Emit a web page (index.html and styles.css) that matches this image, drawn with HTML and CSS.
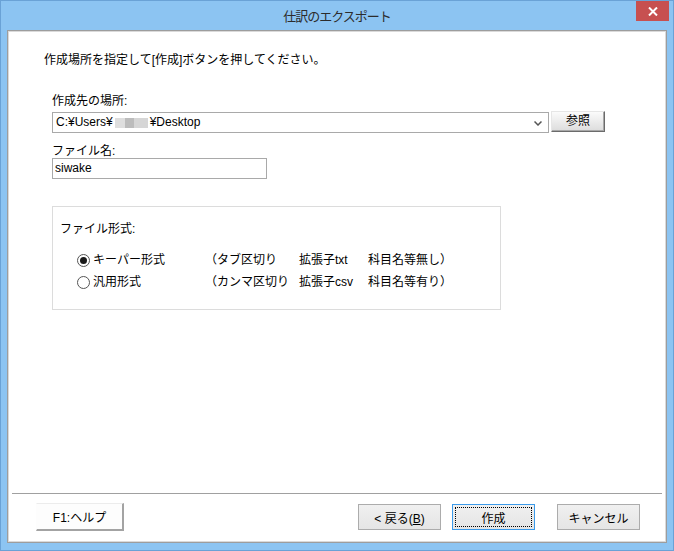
FILE: index.html
```html
<!DOCTYPE html>
<html>
	<head>
		<meta charset="UTF-8">
		<title>仕訳のエクスポート</title>
		<link rel="stylesheet" href="styles.css">
	</head>
	<body>
		<div class="window">
			<div class="titlebar">
				<div class="title">仕訳のエクスポート</div>
				<div class="close">
					<svg width="10" height="9" viewBox="0 0 10 9">
						<path d="M1 0.5 L9 8.5 M9 0.5 L1 8.5" stroke="#fff" stroke-width="2" fill="none"/>
					</svg>
				</div>
			</div>
			<div class="client">
				<div class="client-inner">
					<div class="main">
						<div class="lead">作成場所を指定して[作成]ボタンを押してください。</div>
						<div class="form">
							<div class="label">作成先の場所:</div>
							<div class="path-row">
								<div class="combo">
									<span class="combo-text">C:¥Users¥<span class="blur"></span>¥Desktop</span>
									<svg class="arrow" width="8" height="5" viewBox="0 0 8 5">
										<path d="M0.5 0.5 L4 4 L7.5 0.5" stroke="#555" stroke-width="1.5" fill="none"/>
									</svg>
								</div>
								<div class="btn-ref">参照</div>
							</div>
							<div class="label label-name">ファイル名:</div>
							<div class="textbox">siwake</div>
							<div class="group">
								<div class="group-title">ファイル形式:</div>
								<div class="options">
									<div class="opt"><span class="radio checked"></span>キーパー形式</div>
									<div>（タブ区切り</div>
									<div>拡張子txt</div>
									<div>科目名等無し）</div>
									<div class="opt"><span class="radio"></span>汎用形式</div>
									<div>（カンマ区切り</div>
									<div>拡張子csv</div>
									<div>科目名等有り）</div>
								</div>
							</div>
						</div>
					</div>
					<div class="footer">
						<button class="btn-help">F1:ヘルプ</button>
						<div class="footer-right">
							<button class="btn">&lt; 戻る(<u>B</u>)</button>
							<button class="btn btn-focus"><span class="focus-ring">作成</span></button>
							<button class="btn btn-cancel">キャンセル</button>
						</div>
					</div>
				</div>
			</div>
		</div>
	</body>
</html>
```

FILE: styles.css
```css
*{
	margin: 0;
	padding: 0;
	box-sizing: border-box;
}
body{
	font-family: "Liberation Sans", "Noto Sans CJK JP", sans-serif;
	font-size: 12px;
	color: #000;
	background: #fff;
}
.window{
	width: 674px;
	height: 551px;
	border: 1px solid #6aa2d6;
	background-color: #8cc4f2;
	padding: 0 6px 7px 6px;
	display: flex;
	flex-direction: column;
	position: relative;
}
.titlebar{
	height: 29px;
	margin: 0 -6px;
}
.title{
	text-align: center;
	line-height: 30px;
	font-size: 13px;
	letter-spacing: -1px;
	color: #2c2c2c;
	font-family: "Noto Sans CJK JP", sans-serif;
}
/*閉じるボタン*/
.close{
	position: absolute;
	top: 0;
	right: 4px;
	width: 33px;
	height: 20px;
	background-color: #c75050;
	display: flex;
	align-items: center;
	justify-content: center;
}
.client{
	flex: 1;
	border: 1px solid #9d9d9d;
	display: flex;
}
.client-inner{
	flex: 1;
	border: 1px solid #dadada;
	background-color: #fff;
	display: flex;
	flex-direction: column;
}
.main{
	flex: 1;
	padding-top: 20px;
}
.lead{
	padding-left: 35px;
	line-height: 17px;
}
.form{
	padding-left: 43px;
	margin-top: 24px;
}
.label{
	line-height: 16px;
}
.path-row{
	display: flex;
	align-items: flex-start;
	margin-top: 2px;
}
.combo{
	width: 497px;
	height: 21px;
	margin-top: 1px;
	border: 1px solid #a9a9a9;
	display: flex;
	align-items: center;
	justify-content: space-between;
	padding: 0 6px 0 3px;
}
.combo-text{
	line-height: 19px;
	display: flex;
	align-items: center;
}
.blur{
	display: inline-block;
	width: 33px;
	height: 10px;
	margin: 0 2px;
	background: linear-gradient(to right, #dedede 0, #dedede 30%, #bcbcbc 30%, #bcbcbc 58%, #d6d6d6 58%);
}
.arrow{
	margin-top: 2px;
}
.btn-ref{
	width: 54px;
	height: 21px;
	margin-left: 2px;
	border: 1px solid;
	border-color: #e6e6e6 #6b6b6b #6b6b6b #e6e6e6;
	background: linear-gradient(#fbfbfb, #dcdcdc);
	text-align: center;
	line-height: 19px;
	box-shadow: inset -1px -1px 0 #a8a8a8;
}
.label-name{
	margin-top: 11px;
	line-height: 14px;
}
.textbox{
	width: 215px;
	height: 21px;
	border: 1px solid #a9a9a9;
	padding-left: 2px;
	line-height: 19px;
}
.group{
	width: 449px;
	height: 104px;
	margin-top: 27px;
	border: 1px solid #dcdcdc;
	padding: 14px 0 0 7px;
}
.group-title{
	line-height: 16px;
}
.options{
	display: grid;
	grid-template-columns: 128px 94px 69px auto;
	grid-auto-rows: 22px;
	line-height: 22px;
	margin: 12px 0 0 17px;
}
.opt{
	display: flex;
	align-items: center;
}
.radio{
	width: 13px;
	height: 13px;
	border: 1px solid #555;
	border-radius: 50%;
	margin-right: 3px;
	background-color: #fff;
	display: flex;
	align-items: center;
	justify-content: center;
}
.radio.checked::after{
	content: "";
	width: 7px;
	height: 7px;
	border-radius: 50%;
	background-color: #1a1a1a;
}
/*下のボタン*/
.footer{
	height: 48px;
	margin: 0 3px;
	border-top: 1px solid #a0a0a0;
	padding: 10px 22px 0 24px;
	display: flex;
	align-items: flex-start;
	justify-content: space-between;
}
button{
	font-family: "Liberation Sans", "Noto Sans CJK JP", sans-serif;
	font-size: 12px;
	color: #000;
}
.btn-help{
	width: 88px;
	height: 28px;
	margin-top: -1px;
	background-color: #fdfdfd;
	border-style: solid;
	border-width: 1px 2px 2px 1px;
	border-color: #ececec #a3a3a3 #a3a3a3 #fdfdfd;
}
.footer-right{
	display: flex;
}
.btn{
	width: 83px;
	height: 26px;
	border: 1px solid #acacac;
	background: linear-gradient(#f0f0f0, #e5e5e5);
	margin-left: 11px;
}
.btn-focus{
	border-color: #3c9bea;
	padding: 2px;
	display: flex;
}
.focus-ring{
	flex: 1;
	border: 1px dotted #000;
	display: flex;
	align-items: center;
	justify-content: center;
}
.btn-cancel{
	margin-left: 22px;
}
```
